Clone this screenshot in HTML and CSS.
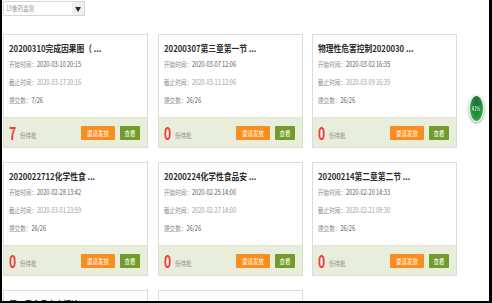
FILE: index.html
```html
<!DOCTYPE html>
<html lang="zh-CN">
<head>
    <meta charset="UTF-8">
    <meta name="viewport" content="width=device-width, initial-scale=1.0">
    <title>作业批阅</title>
    <link rel="stylesheet" href="styles.css">
</head>
<body>
    <div class="page">
        <div class="picker">
            <span class="picker-text"><span class="sx">19食药监测</span></span>
            <span class="picker-arrow">▼</span>
        </div>

        <div class="grid">
            <div class="card">
                <div class="card-body">
                    <div class="card-title">20200310完成因果图（ ...</div>
                    <div class="meta"><span class="meta-label">开始时间：</span><span class="meta-start">2020-03-10 20:15</span></div>
                    <div class="meta"><span class="meta-label">截止时间：</span><span class="meta-end">2020-03-17 20:16</span></div>
                    <div class="meta"><span class="meta-label">提交数：</span><span class="meta-start">7/26</span></div>
                </div>
                <div class="card-foot">
                    <span class="pending-num">7</span><span class="pending-text">份待批</span>
                    <span class="btn btn-reset"><span class="sx">重设发放</span></span>
                    <span class="btn btn-view"><span class="sx">查看</span></span>
                </div>
            </div>

            <div class="card">
                <div class="card-body">
                    <div class="card-title">20200307第三章第一节 ...</div>
                    <div class="meta"><span class="meta-label">开始时间：</span><span class="meta-start">2020-03-07 12:06</span></div>
                    <div class="meta"><span class="meta-label">截止时间：</span><span class="meta-end">2020-03-11 12:06</span></div>
                    <div class="meta"><span class="meta-label">提交数：</span><span class="meta-start">26/26</span></div>
                </div>
                <div class="card-foot">
                    <span class="pending-num">0</span><span class="pending-text">份待批</span>
                    <span class="btn btn-reset"><span class="sx">重设发放</span></span>
                    <span class="btn btn-view"><span class="sx">查看</span></span>
                </div>
            </div>

            <div class="card">
                <div class="card-body">
                    <div class="card-title">物理性危害控制2020030 ...</div>
                    <div class="meta"><span class="meta-label">开始时间：</span><span class="meta-start">2020-03-02 16:35</span></div>
                    <div class="meta"><span class="meta-label">截止时间：</span><span class="meta-end">2020-03-09 16:35</span></div>
                    <div class="meta"><span class="meta-label">提交数：</span><span class="meta-start">26/26</span></div>
                </div>
                <div class="card-foot">
                    <span class="pending-num">0</span><span class="pending-text">份待批</span>
                    <span class="btn btn-reset"><span class="sx">重设发放</span></span>
                    <span class="btn btn-view"><span class="sx">查看</span></span>
                </div>
            </div>

            <div class="card">
                <div class="card-body">
                    <div class="card-title">2020022712化学性食 ...</div>
                    <div class="meta"><span class="meta-label">开始时间：</span><span class="meta-start">2020-02-28 13:42</span></div>
                    <div class="meta"><span class="meta-label">截止时间：</span><span class="meta-end">2020-03-01 23:59</span></div>
                    <div class="meta"><span class="meta-label">提交数：</span><span class="meta-start">26/26</span></div>
                </div>
                <div class="card-foot">
                    <span class="pending-num">0</span><span class="pending-text">份待批</span>
                    <span class="btn btn-reset"><span class="sx">重设发放</span></span>
                    <span class="btn btn-view"><span class="sx">查看</span></span>
                </div>
            </div>

            <div class="card">
                <div class="card-body">
                    <div class="card-title">20200224化学性食品安 ...</div>
                    <div class="meta"><span class="meta-label">开始时间：</span><span class="meta-start">2020-02-25 14:00</span></div>
                    <div class="meta"><span class="meta-label">截止时间：</span><span class="meta-end">2020-02-27 14:00</span></div>
                    <div class="meta"><span class="meta-label">提交数：</span><span class="meta-start">26/26</span></div>
                </div>
                <div class="card-foot">
                    <span class="pending-num">0</span><span class="pending-text">份待批</span>
                    <span class="btn btn-reset"><span class="sx">重设发放</span></span>
                    <span class="btn btn-view"><span class="sx">查看</span></span>
                </div>
            </div>

            <div class="card">
                <div class="card-body">
                    <div class="card-title">20200214第二章第二节 ...</div>
                    <div class="meta"><span class="meta-label">开始时间：</span><span class="meta-start">2020-02-20 14:33</span></div>
                    <div class="meta"><span class="meta-label">截止时间：</span><span class="meta-end">2020-02-21 08:30</span></div>
                    <div class="meta"><span class="meta-label">提交数：</span><span class="meta-start">26/26</span></div>
                </div>
                <div class="card-foot">
                    <span class="pending-num">0</span><span class="pending-text">份待批</span>
                    <span class="btn btn-reset"><span class="sx">重设发放</span></span>
                    <span class="btn btn-view"><span class="sx">查看</span></span>
                </div>
            </div>

            <div class="card">
                <div class="card-body">
                    <div class="card-title">第一章食品安全概论20200...</div>
                </div>
            </div>

            <div class="card">
                <div class="card-body"></div>
            </div>
        </div>
    </div>

    <div class="badge"><span class="sx">41%</span></div>
    <div class="frame"></div>
</body>
</html>
```

FILE: styles.css
```css
* {
    margin: 0;
    padding: 0;
    box-sizing: border-box;
    font-family: "Noto Sans CJK SC", "Noto Sans", sans-serif;
}

html, body {
    background: #ffffff;
    overflow: hidden;
}

.page {
    padding: 1px 0 0 3px;
}

/* 顶部下拉框 */
.picker {
    display: flex;
    width: 82px;
    height: 15px;
    border: 1px solid #d6d6d6;
    margin-bottom: 18px;
}

.picker-text {
    flex: 1;
    font-size: 7px;
    line-height: 13px;
    color: #999;
    padding-left: 2px;
}

.picker-arrow {
    width: 12px;
    background: #f0f0f0;
    font-size: 6px;
    line-height: 13px;
    text-align: center;
    color: #222;
}

.sx {
    display: inline-block;
    white-space: nowrap;
    transform: scaleX(0.78);
    transform-origin: left center;
}

/* 卡片列表 */
.grid {
    display: grid;
    grid-template-columns: repeat(3, 145px);
    grid-auto-rows: 114px;
    column-gap: 9.5px;
    row-gap: 14px;
}

.card {
    display: flex;
    flex-direction: column;
    border: 1px solid #dcdcdc;
    background: #fff;
}

.card-body {
    flex: 1;
    padding: 7px 5px 0;
}

.card-title {
    font-size: 9px;
    font-weight: 700;
    line-height: 13px;
    color: #2b2b2b;
    white-space: nowrap;
    transform: scaleX(0.86);
    transform-origin: left center;
}

.meta {
    font-size: 7px;
    line-height: 18px;
    white-space: nowrap;
    transform: scaleX(0.8);
    transform-origin: left center;
}

.meta-label {
    color: #8a8a8a;
}

.meta-start {
    color: #555;
}

.meta-end {
    color: #9a9a9a;
}

.card-foot {
    height: 30px;
    display: flex;
    align-items: center;
    padding: 0 7px 0 5px;
    background: #e9eddb;
    border-top: 1px solid #e2e6d2;
}

.pending-num {
    display: inline-block;
    font-size: 17px;
    font-weight: 700;
    line-height: 20px;
    color: #f03c3c;
    transform: scaleX(0.72);
    transform-origin: left center;
    width: 9px;
}

.pending-text {
    font-size: 7px;
    color: #8d8d8d;
    margin-left: 2px;
    margin-top: 5px;
    display: inline-block;
    transform: scaleX(0.78);
    transform-origin: left center;
}

.btn {
    height: 14px;
    font-size: 7px;
    line-height: 14px;
    color: #fff;
    text-align: center;
    border-radius: 1px;
    overflow: hidden;
}

    .btn .sx {
        transform-origin: center center;
    }

.btn-reset {
    width: 34px;
    margin-left: auto;
    background: #fb8d1e;
}

.btn-view {
    width: 20px;
    margin-left: 5px;
    background: #719c2b;
}

/* 右侧悬浮进度 */
.badge {
    position: fixed;
    left: 469px;
    top: 95px;
    width: 15px;
    height: 27px;
    border-radius: 50%;
    background: radial-gradient(ellipse at 50% 25%, #1f6e34 0%, #1f8a3c 45%, #3fc553 100%);
    border: 1px solid #e8f5ea;
    box-shadow: 0 1px 3px rgba(0, 0, 0, 0.45);
    color: #fff;
    font-size: 6px;
    line-height: 25px;
    text-align: center;
    overflow: hidden;
}

    .badge .sx {
        transform: scaleX(0.7);
        transform-origin: center center;
    }

.frame {
    position: fixed;
    inset: 0;
    border-left: 2px solid #000;
    border-right: 3px solid #000;
    border-bottom: 2px solid #000;
    pointer-events: none;
}
```
